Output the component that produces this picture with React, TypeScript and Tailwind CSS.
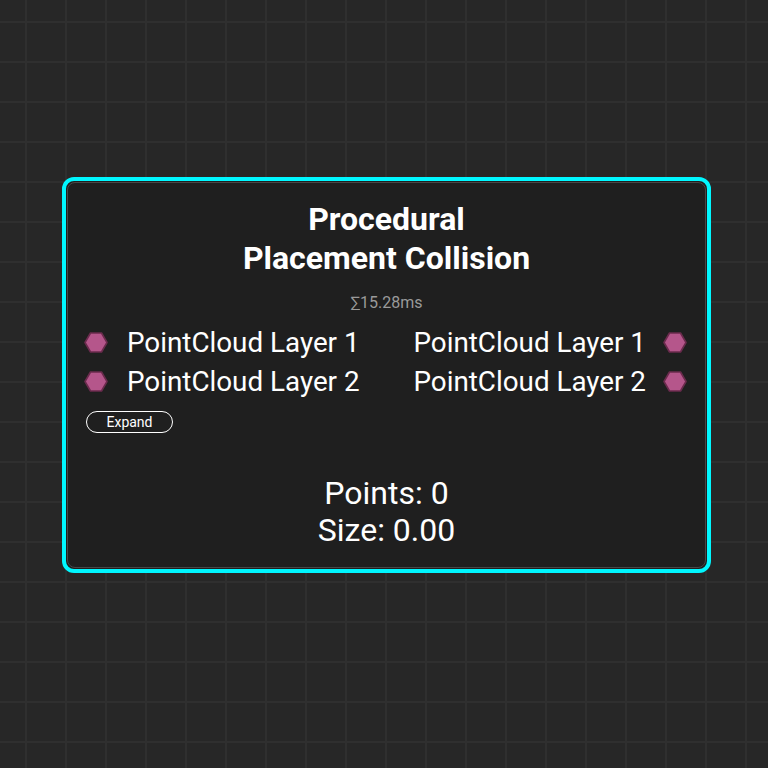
import React from "react";

function Hex() {
  return (
    <svg width="24" height="21" viewBox="0 0 24 21" className="shrink-0">
      <polygon
        points="1,10.5 6.5,1 17.5,1 23,10.5 17.5,20 6.5,20"
        fill="#b5568b"
        stroke="#6b2b4d"
        strokeWidth="1.6"
        strokeLinejoin="round"
      />
    </svg>
  );
}

export default function App() {
  return (
    <div
      className="relative w-[768px] h-[768px] overflow-hidden bg-[#272727] bg-[linear-gradient(to_right,#2f2f2f_2px,transparent_2px),linear-gradient(to_bottom,#2f2f2f_2px,transparent_2px)] bg-[size:40px_40px] bg-[position:25px_21px]"
      style={{ fontFamily: "Roboto, 'Liberation Sans', sans-serif" }}
    >
      <div className="absolute left-[62px] top-[177px] w-[649px] h-[396px] rounded-[12px] border-4 border-[#00f7ff] bg-[#1f1f1f] p-px">
        <div className="flex flex-col h-full rounded-[8px] border border-[#474747] bg-[#1f1f1f] text-white">
          <div className="pt-[17px] text-center font-bold text-[32px] leading-[39px]">
            <div>Procedural</div>
            <div>Placement Collision</div>
          </div>
          <div className="mt-[15px] text-center text-[16px] leading-[20px] text-[#9a9a9a]">
            ∑15.28ms
          </div>
          <div className="mt-[10px] flex justify-between">
            <div className="flex flex-col pl-[16px]">
              <div className="flex items-center h-[39px] gap-[19px]">
                <Hex />
                <span className="text-[27.8px]">PointCloud Layer 1</span>
              </div>
              <div className="flex items-center h-[39px] gap-[19px]">
                <Hex />
                <span className="text-[27.8px]">PointCloud Layer 2</span>
              </div>
            </div>
            <div className="flex flex-col items-end pr-[18px]">
              <div className="flex items-center h-[39px] gap-[17px]">
                <span className="text-[27.8px]">PointCloud Layer 1</span>
                <Hex />
              </div>
              <div className="flex items-center h-[39px] gap-[17px]">
                <span className="text-[27.8px]">PointCloud Layer 2</span>
                <Hex />
              </div>
            </div>
          </div>
          <div className="mt-[10px] pl-[18px]">
            <div className="flex items-center justify-center w-[87px] h-[22px] rounded-full border-[1.5px] border-white text-[14px] leading-none">
              Expand
            </div>
          </div>
          <div className="mt-[42px] text-center text-[32px] leading-[37px]">
            <div>Points: 0</div>
            <div>Size: 0.00</div>
          </div>
        </div>
      </div>
    </div>
  );
}
